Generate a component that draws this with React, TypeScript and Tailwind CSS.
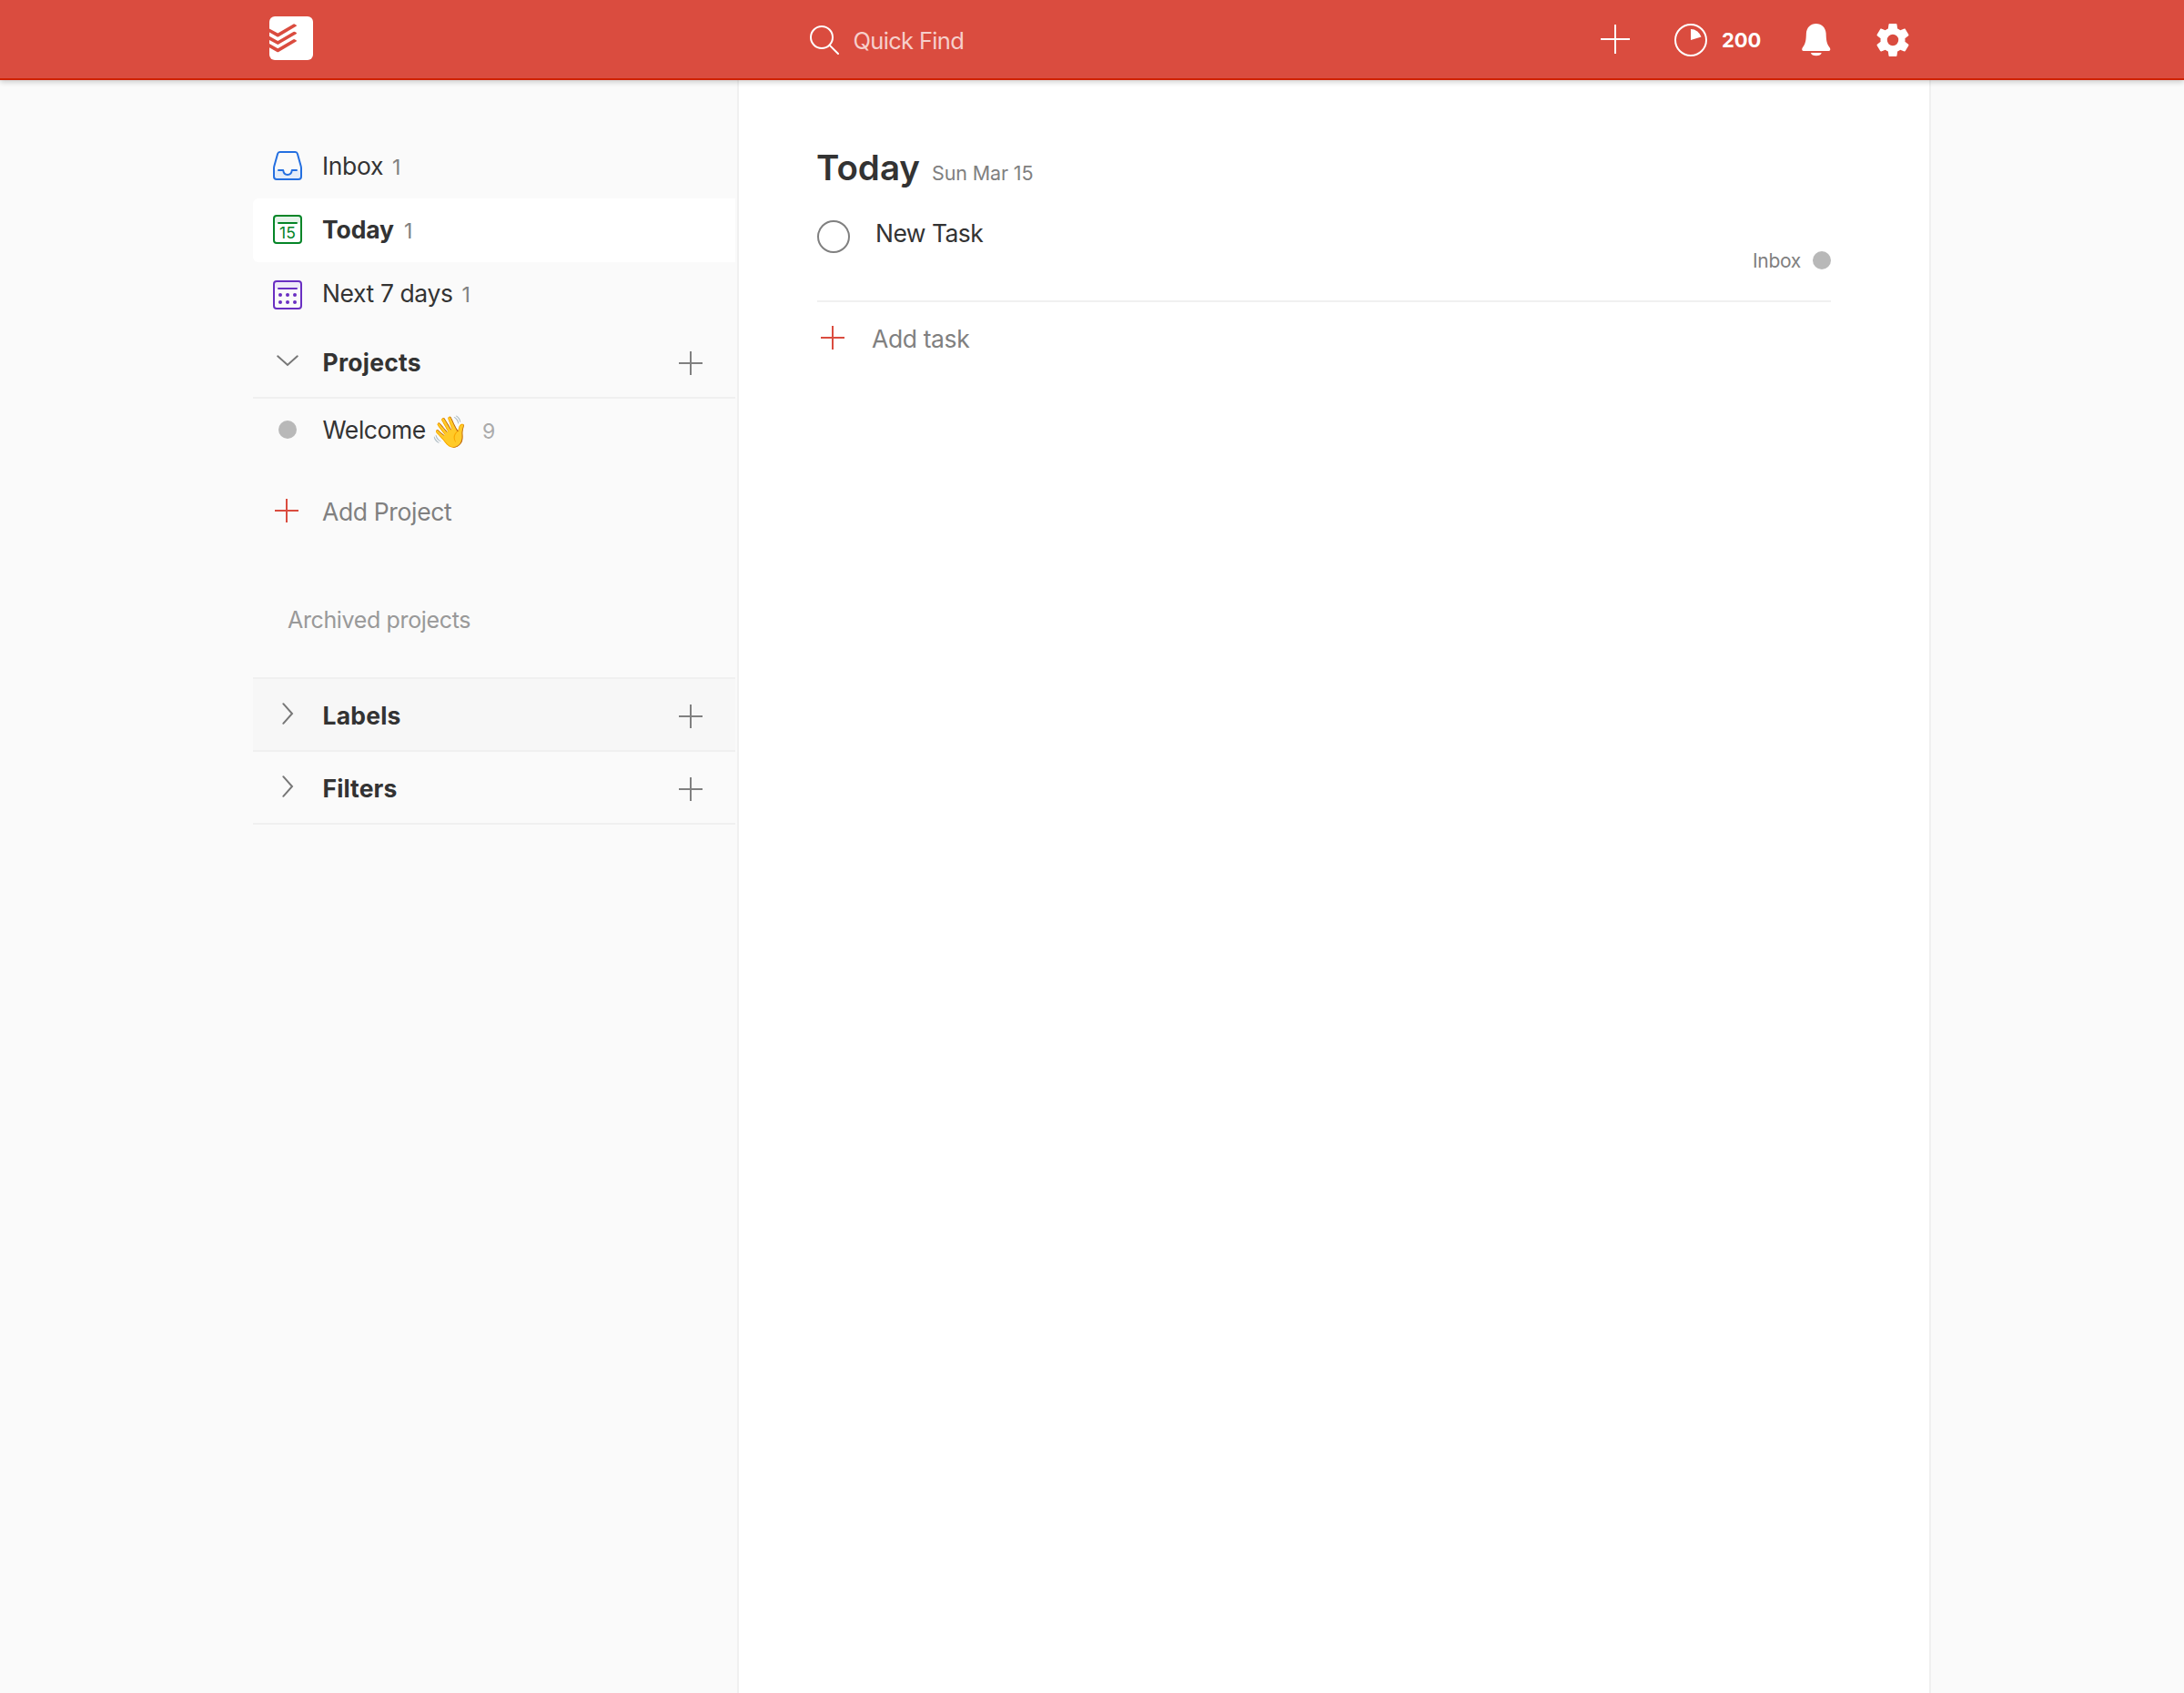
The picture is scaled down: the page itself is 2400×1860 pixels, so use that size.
import React from "react";

type SvgProps = { className?: string };

function Plus({ size, className = "" }: { size: number; className?: string }) {
  const c = size / 2;
  return (
    <svg
      width={size}
      height={size}
      viewBox={`0 0 ${size} ${size}`}
      className={`shrink-0 ${className}`}
      fill="none"
      stroke="currentColor"
      strokeWidth="2"
    >
      <path d={`M${c} 0V${size}M0 ${c}H${size}`} />
    </svg>
  );
}

function Logo({ className = "" }: SvgProps) {
  return (
    <svg width="48" height="48" viewBox="0 0 48 48" className={`shrink-0 ${className}`}>
      <rect width="48" height="48" rx="6" fill="#fff" />
      <g fill="#da4c3f">
        <path d="M0 13.4 9.3 18.6 26.4 8.6Q27.3 8.1 28.2 8.7L29.9 9.7Q30.3 10.3 29.6 10.8L10.3 22.2Q9.3 22.8 8.3 22.2L0 17.6Z" />
        <path d="M0 21.8 9.3 27 26.4 17Q27.3 16.5 28.2 17.1L29.9 18.1Q30.3 18.7 29.6 19.2L10.3 30.6Q9.3 31.2 8.3 30.6L0 26Z" />
        <path d="M0 30.1 9.3 35.3 26.4 25.3Q27.3 24.8 28.2 25.4L29.9 26.4Q30.3 27 29.6 27.5L10.3 38.9Q9.3 39.5 8.3 38.9L0 34.3Z" />
      </g>
    </svg>
  );
}

function SearchIcon({ className = "" }: SvgProps) {
  return (
    <svg width="32" height="32" viewBox="0 0 32 32" className={`shrink-0 ${className}`} fill="none" stroke="#fff" strokeWidth="2">
      <circle cx="13" cy="13" r="12" />
      <path d="M21.6 21.6 31 31" strokeLinecap="round" />
    </svg>
  );
}

function ProgressIcon({ className = "" }: SvgProps) {
  return (
    <svg width="36" height="36" viewBox="0 0 36 36" className={`shrink-0 ${className}`}>
      <circle cx="18" cy="18" r="17" fill="none" stroke="#fff" strokeWidth="2" />
      <path d="M18 18V6a12 12 0 0 1 11.5 8.6Z" fill="#fff" />
    </svg>
  );
}

function BellIcon({ className = "" }: SvgProps) {
  return (
    <svg width="32" height="36" viewBox="0 0 32 36" className={`shrink-0 ${className}`} fill="#fff">
      <path d="M15.7 0C9.6 0 5.2 4.6 4.9 10.6C4.6 18.5 4.2 22.2 .7 26.6C-.2 28.2 .2 30 1.8 30H29.7C31.3 30 31.7 28.2 30.8 26.6C27.2 22.2 26.9 18.5 26.6 10.6C26.3 4.6 21.8 0 15.7 0Z" />
      <path d="M9.9 32H21.7A6 4 0 0 1 9.9 32Z" />
    </svg>
  );
}

function GearIcon({ className = "" }: SvgProps) {
  return (
    <svg width="36" height="36" viewBox="2 2 20 20" className={`shrink-0 ${className}`} fill="#fff">
      <path d="M19.43 12.98c.04-.32.07-.64.07-.98s-.03-.66-.07-.98l2.11-1.65c.19-.15.24-.42.12-.64l-2-3.46c-.12-.22-.39-.3-.61-.22l-2.49 1c-.52-.4-1.08-.73-1.69-.98l-.38-2.65C14.46 2.18 14.25 2 14 2h-4c-.25 0-.46.18-.49.42l-.38 2.65c-.61.25-1.17.59-1.69.98l-2.49-1c-.23-.09-.49 0-.61.22l-2 3.46c-.13.22-.07.49.12.64l2.11 1.65c-.04.32-.07.65-.07.98s.03.66.07.98l-2.11 1.65c-.19.15-.24.42-.12.64l2 3.46c.12.22.39.3.61.22l2.49-1c.52.4 1.08.73 1.69.98l.38 2.65c.03.24.24.42.49.42h4c.25 0 .46-.18.49-.42l.38-2.65c.61-.25 1.17-.59 1.69-.98l2.49 1c.23.09.49 0 .61-.22l2-3.46c.12-.22.07-.49-.12-.64l-2.11-1.65zM12 15.45a3.45 3.45 0 1 1 0-6.9 3.45 3.45 0 0 1 0 6.9z" />
    </svg>
  );
}

function InboxIcon({ className = "" }: SvgProps) {
  return (
    <svg width="32" height="32" viewBox="0 0 32 32" className={`shrink-0 ${className}`} fill="none" stroke="#246fe0" strokeWidth="2">
      <path d="M1 21H11.2C11.6 24.4 13.2 26 16 26S20.4 24.4 20.8 21H31V28a3 3 0 0 1-3 3H4a3 3 0 0 1-3-3Z" fill="#e3ecf9" stroke="none" />
      <path d="M7.6 1H24.4a2.6 2.6 0 0 1 2.5 1.9L30.6 16.2Q31 17.6 31 19V28a3 3 0 0 1-3 3H4a3 3 0 0 1-3-3V19Q1 17.6 1.4 16.2L5.1 2.9A2.6 2.6 0 0 1 7.6 1Z" />
      <path d="M6 21H11.2C11.6 24.4 13.2 26 16 26S20.4 24.4 20.8 21H26" strokeLinecap="round" strokeLinejoin="round" />
    </svg>
  );
}

function TodayIcon({ className = "" }: SvgProps) {
  return (
    <svg width="32" height="32" viewBox="0 0 32 32" className={`shrink-0 ${className}`} fill="none">
      <path d="M1 9V4a3 3 0 0 1 3-3H28a3 3 0 0 1 3 3V9Z" fill="#e6f3e9" />
      <rect x="1" y="1" width="30" height="30" rx="3" stroke="#058527" strokeWidth="2" />
      <path d="M6 9H26" stroke="#058527" strokeWidth="2" strokeLinecap="round" />
      <text x="16" y="26" textAnchor="middle" className="font-['Inter',sans-serif] text-[17.5px]" fill="#058527">
        15
      </text>
    </svg>
  );
}

function WeekIcon({ className = "" }: SvgProps) {
  return (
    <svg width="32" height="32" viewBox="0 0 32 32" className={`shrink-0 ${className}`} fill="none">
      <path d="M1 9V4a3 3 0 0 1 3-3H28a3 3 0 0 1 3 3V9Z" fill="#efe9f8" />
      <rect x="1" y="1" width="30" height="30" rx="3" stroke="#692fc2" strokeWidth="2" />
      <path d="M6 9H26" stroke="#692fc2" strokeWidth="2" strokeLinecap="round" />
      <g fill="#692fc2">
        <circle cx="8" cy="16" r="2" />
        <circle cx="16" cy="16" r="2" />
        <circle cx="24" cy="16" r="2" />
        <circle cx="8" cy="24" r="2" />
        <circle cx="16" cy="24" r="2" />
        <circle cx="24" cy="24" r="2" />
      </g>
    </svg>
  );
}

function Chevron({ open, className = "" }: { open?: boolean; className?: string }) {
  return (
    <svg width="32" height="32" viewBox="0 0 32 32" className={`shrink-0 ${className}`} fill="none" stroke="#777" strokeWidth="2" strokeLinecap="round">
      <path d={open ? "M5.2 11.3 16 21 26.8 11.3" : "M11.3 5.2 21 16 11.3 26.8"} />
    </svg>
  );
}

function Section({ title, open, titleClass, className }: { title: string; open?: boolean; titleClass: string; className: string }) {
  return (
    <div className={`flex h-20 items-start border-b-2 border-[#f0f0f0] pl-[22px] pr-9 ${className}`}>
      <Chevron open={open} className="mt-[22px]" />
      <span className={`ml-[22.5px] text-[26.5px] font-bold leading-20 ${titleClass}`}>{title}</span>
      <Plus size={26} className="ml-auto mt-7 text-[#808080]" />
    </div>
  );
}

function Count({ children }: { children: React.ReactNode }) {
  return <span className="ml-[10px] text-[23px] leading-none text-[#808080]">{children}</span>;
}

export default function App() {
  return (
    <div className="flex min-h-[1860px] flex-col bg-[#fafafa] font-['Inter',sans-serif] text-[#333]">
      <header className="relative z-10 h-[88px] border-b-2 border-[#cf2100] bg-[#da4c3f] shadow-[0_2px_6px_rgba(0,0,0,0.2)]">
        <div className="mx-auto flex w-[1844px] items-start pl-[18px] pr-6">
          <Logo className="mt-[18px]" />
          <SearchIcon className="ml-[546px] mt-7" />
          <span className="ml-[15.5px] mt-[3px] text-[25.5px] leading-[83px] tracking-[-0.68px] text-[#f6cfcb]">Quick Find</span>
          <div className="ml-auto flex items-start">
            <Plus size={32} className="mt-[27px] text-white" />
            <ProgressIcon className="ml-[49px] mt-[26px]" />
            <span className="ml-4 mt-px w-11 text-[22px] font-bold leading-[86px] tracking-[-0.1px] text-white">200</span>
            <BellIcon className="ml-11 mt-[26px]" />
            <GearIcon className="ml-[50px] mt-[26px]" />
          </div>
        </div>
      </header>

      <div className="mx-auto flex w-[1844px] flex-1">
        <aside className="w-[530px] pt-[60px]">
          <div className="flex h-[70px] items-start pl-[22px]">
            <InboxIcon className="mt-[18px]" />
            <div className="ml-[22px] flex items-baseline">
              <span className="text-[26.5px] leading-[68px] tracking-[-0.34px]">Inbox</span>
              <Count>1</Count>
            </div>
          </div>
          <div className="flex h-[70px] items-start rounded-l-md bg-white pl-[22px]">
            <TodayIcon className="mt-[18px]" />
            <div className="ml-[22px] flex items-baseline">
              <span className="w-[80px] text-[26.5px] font-bold leading-[68px] tracking-[-0.1px]">Today</span>
              <Count>1</Count>
            </div>
          </div>
          <div className="flex h-[70px] items-start pl-[22px]">
            <WeekIcon className="mt-5" />
            <div className="ml-[22px] flex items-baseline">
              <span className="text-[26.5px] leading-[68px] tracking-[-0.41px]">Next 7 days</span>
              <Count>1</Count>
            </div>
          </div>

          <Section title="Projects" open titleClass="tracking-[0.22px]" className="" />
          <div className="flex h-[70px] items-start pl-7">
            <span className="mt-6 size-5 rounded-full bg-[#b8b8b8]" />
            <div className="ml-[28.5px] flex h-[68px] items-start">
              <span className="text-[26.5px] leading-[68px] tracking-[-0.42px]">Welcome</span>
              <span className="ml-[5px] mt-[2px] w-[42px] text-[34px] leading-[68px]">👋</span>
              <span className="ml-[15px] mt-[2px] text-[23px] leading-[68px] text-[#aaa]">9</span>
            </div>
          </div>
          <div className="mt-5 flex h-[70px] items-start pl-6">
            <Plus size={26} className="mt-5 text-[#da4c3f]" />
            <span className="ml-[26px] text-[26.5px] leading-[68px] tracking-[-0.35px] text-[#808080]">Add Project</span>
          </div>
          <div className="mt-12 h-[70px] pl-[38px] text-[25px] leading-[70px] tracking-[-0.36px] text-[#999]">Archived projects</div>
          <div className="mt-7 border-t-2 border-[#f0f0f0]">
            <Section title="Labels" titleClass="tracking-[0.2px]" className="bg-[#f7f7f7]" />
            <Section title="Filters" titleClass="tracking-[0.1px]" className="" />
          </div>
        </aside>

        <main className="ml-[2px] w-[1312px] border-x-2 border-[#f0f0f0] bg-white pl-[86px] pr-[108px] pt-[66px]">
          <div className="flex h-[60px] items-baseline">
            <h1 className="-ml-px w-[113px] text-[38.5px] font-semibold leading-[60px] tracking-[0px]">Today</h1>
            <span className="ml-[14px] text-[21.5px] leading-none tracking-[-0.14px] text-[#808080]">Sun Mar 15</span>
          </div>
          <div className="flex h-[118px] items-start border-b-2 border-[#f0f0f0]">
            <span className="mt-7 size-9 shrink-0 rounded-full border-2 border-[#808080]" />
            <span className="ml-7 text-[26.5px] leading-[84px] tracking-[-0.55px]">New Task</span>
            <div className="ml-auto mt-[60px] flex h-6 items-center gap-[13px]">
              <span className="mt-[2px] text-[21px] leading-6 tracking-[-0.3px] text-[#808080]">Inbox</span>
              <span className="size-5 rounded-full bg-[#b8b8b8]" />
            </div>
          </div>
          <div className="flex items-start pl-1">
            <Plus size={26} className="mt-[26px] text-[#da4c3f]" />
            <span className="ml-[30px] text-[26.5px] leading-[80px] tracking-[-0.38px] text-[#808080]">Add task</span>
          </div>
        </main>
      </div>
    </div>
  );
}
